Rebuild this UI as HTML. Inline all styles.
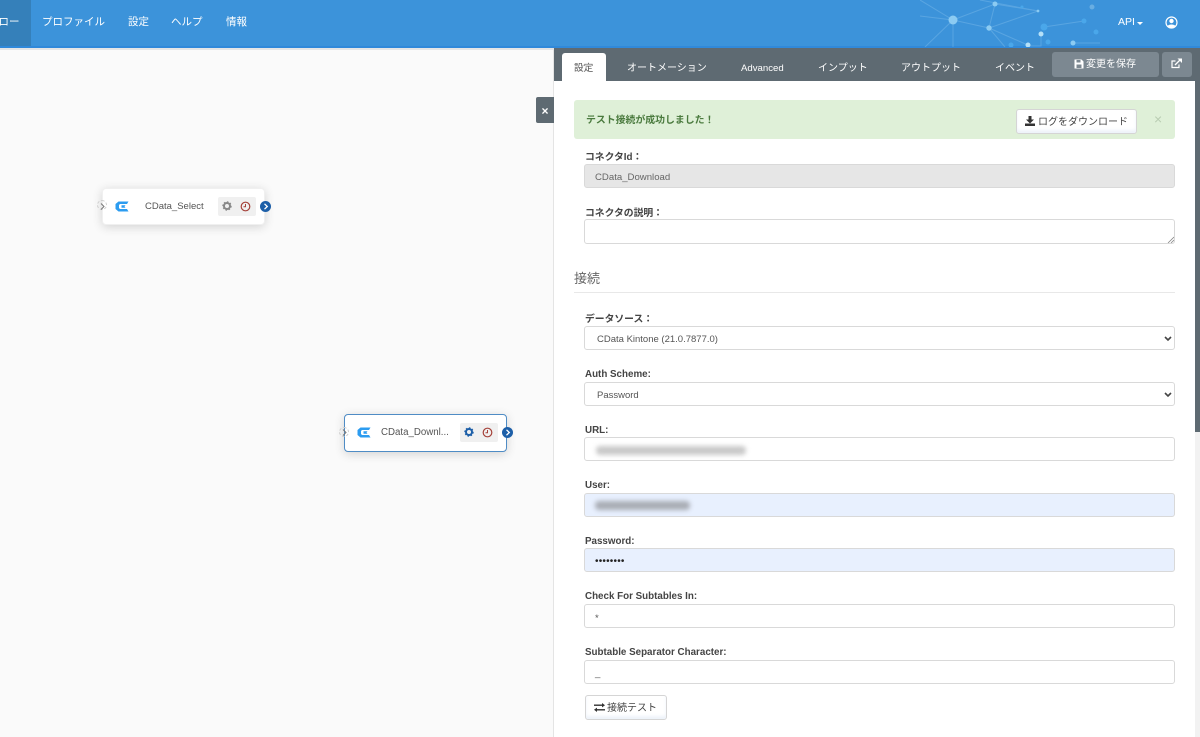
<!DOCTYPE html>
<html lang="ja"><head><meta charset="utf-8"><title>Flow</title>
<style>
html,body{margin:0;padding:0;width:1200px;height:737px;overflow:hidden;background:#fafafa}
body{font-family:"Liberation Sans","Noto Sans CJK JP",sans-serif;font-size:11px;color:#555;position:relative}
.a{position:absolute}
.nav{color:#fff;font-size:10.5px;top:15px;line-height:14px;white-space:nowrap}
.tab{color:#fff;font-size:10px;top:62px;line-height:14px;white-space:nowrap}
.lb{position:absolute;left:585px;font-size:9.8px;font-weight:bold;color:#444;line-height:13px;white-space:nowrap;margin-top:1px}
.in{position:absolute;left:584px;width:589px;height:22px;border:1px solid #d9d9d9;border-radius:3px;background:#fff;font-size:9.6px;color:#555;line-height:25px;text-indent:10px;white-space:nowrap;overflow:hidden}
.blue{background:#e8f0fe}
.node{position:absolute;background:#fff;border-radius:4px;box-shadow:0 2px 10px rgba(0,0,0,.16);box-sizing:border-box}
.nm{position:absolute;font-size:9.5px;color:#555;line-height:12px;white-space:nowrap}
.ib{position:absolute;background:#f0f0f0;width:38px;height:19px;border-radius:2px}
.blur{position:absolute;height:9px;border-radius:4px;filter:blur(2.5px)}
.btn{position:absolute;background:#fff;border:1px solid #d5d5d5;border-radius:3px;box-sizing:border-box;font-size:10px;color:#444;white-space:nowrap;box-shadow:inset 0 -3px 3px #eef3fa}
</style></head><body>

<div class="a" style="left:0;top:0;width:1200px;height:46px;background:#3c93da"></div>
<div class="a" style="left:0;top:46px;width:1200px;height:2px;background:#3089da"></div>
<div class="a" style="left:0;top:48px;width:1200px;height:2px;background:#e6e6e6"></div>
<div class="a" style="left:0;top:0;width:31px;height:46px;background:#3580ba"></div>

<svg class="a" style="left:920px;top:0" width="180" height="47" viewBox="0 0 180 47">
<g stroke="#7dbbea" stroke-width="1" fill="none" opacity=".45">
<path d="M33 20L75 4L69 28L33 20M75 4L118 11L69 28L110 46M69 28L85 47M33 20L5 47M33 20V47M33 20L0 16M121 34V46L108 46M124 27L164 21M0 0L33 20"/>
<path d="M153 43H180M118 11L60 0"/></g>
<g fill="#8ccbf2"><circle cx="33" cy="20" r="4.5"/><circle cx="75" cy="4" r="2.5"/><circle cx="69" cy="28" r="2.7"/><circle cx="118" cy="11" r="1.4"/><circle cx="121" cy="34" r="2.5" fill="#b5e0f8"/><circle cx="108" cy="45" r="2.5" fill="#b5e0f8"/><circle cx="153" cy="43" r="2.5"/></g>
<g fill="#4aa7ea"><circle cx="124" cy="27" r="3.5"/><circle cx="128" cy="42" r="2.5"/><circle cx="91" cy="45" r="2.5"/><circle cx="102" cy="7" r="1.5"/><circle cx="164" cy="21" r="2.5"/><circle cx="176" cy="32" r="2.5"/></g>
<circle cx="172" cy="7" r="2.5" fill="#69aee2"/>
</svg>

<div class="a nav" style="left:-12px;top:15px">フロー</div>
<div class="a nav" style="left:42px">プロファイル</div>
<div class="a nav" style="left:128px">設定</div>
<div class="a nav" style="left:171px">ヘルプ</div>
<div class="a nav" style="left:226px">情報</div>
<div class="a nav" style="left:1118px;font-size:10.5px">API</div>
<div class="a" style="left:1137px;top:22px;width:0;height:0;border-left:3px solid transparent;border-right:3px solid transparent;border-top:3px solid #fff"></div>
<svg class="a" style="left:1165px;top:16px" width="13" height="13" viewBox="0 0 13 13"><circle cx="6.5" cy="6.5" r="5.5" fill="none" stroke="#fff" stroke-width="1.2"/><circle cx="6.5" cy="5" r="2.2" fill="#fff"/><path d="M2.7 10.2C3.5 8 9.5 8 10.3 10.2L6.5 12Z" fill="#fff"/></svg>

<!-- panel -->
<div class="a" style="left:553px;top:48px;width:647px;height:689px;background:#fff;border-left:1px solid #e4e4e4;box-sizing:border-box"></div>
<div class="a" style="left:554px;top:48px;width:646px;height:33px;background:#5e6a72"></div>
<div class="a" style="left:1195px;top:81px;width:5px;height:351px;background:#5e6a72"></div>
<div class="a" style="left:1195px;top:432px;width:5px;height:305px;background:#f2f2f2"></div>

<div class="a" style="left:562px;top:53px;width:44px;height:28px;background:#fff;border-radius:3px 3px 0 0"></div>
<div class="a tab" style="left:574px;color:#555;font-size:9.7px">設定</div>
<div class="a tab" style="left:627px">オートメーション</div>
<div class="a tab" style="left:741px;font-size:9.6px">Advanced</div>
<div class="a tab" style="left:818px">インプット</div>
<div class="a tab" style="left:901px">アウトプット</div>
<div class="a tab" style="left:995px">イベント</div>

<div class="a" style="left:1052px;top:52px;width:107px;height:25px;background:#7c8891;border-radius:3px"></div>
<div class="a" style="left:1086px;top:58px;color:#fff;font-size:10px;line-height:14px;white-space:nowrap">変更を保存</div>
<svg class="a" style="left:1074px;top:59px" width="10" height="10" viewBox="0 0 10 10"><path d="M0.5 0.5H7.5L9.5 2.5V9.5H0.5Z" fill="#fff"/><rect x="2.5" y="1" width="4" height="2.5" fill="#7c8891"/><rect x="2.5" y="5.5" width="5" height="3.5" fill="#7c8891"/></svg>
<div class="a" style="left:1162px;top:52px;width:30px;height:25px;background:#7c8891;border-radius:3px"></div>
<svg class="a" style="left:1171px;top:58px" width="12" height="11" viewBox="0 0 12 11"><path d="M8 6.5V9.5H1V3H4.5" fill="none" stroke="#fff" stroke-width="1.2"/><path d="M4 7L9 2" stroke="#fff" stroke-width="1.3"/><path d="M6.5 0.5H11V5Z" fill="#fff"/></svg>

<div class="a" style="left:536px;top:97px;width:18px;height:26px;background:#5e6a72;border-radius:2px 0 0 2px;color:#fff;font-size:12px;font-weight:bold;line-height:28px;text-align:center">×</div>

<div class="a" style="left:574px;top:100px;width:601px;height:39px;background:#dff0d8;border-radius:3px"></div>
<div class="a" style="left:586px;top:114px;font-size:9.9px;font-weight:bold;color:#4a7a3e;line-height:14px;white-space:nowrap">テスト接続が成功しました！</div>
<div class="btn" style="left:1016px;top:109px;width:121px;height:25px;line-height:25px;padding-left:21px">ログをダウンロード</div>
<svg class="a" style="left:1025px;top:116px" width="10" height="10" viewBox="0 0 10 10"><path d="M3.5 0H6.5V3.5H9L5 7.5L1 3.5H3.5Z" fill="#333"/><rect x="0" y="7.5" width="10" height="2.5" fill="#333"/></svg>
<div class="a" style="left:1154px;top:112px;font-size:14px;color:#b9cdb2;line-height:14px">×</div>

<div class="lb" style="top:150px">コネクタId：</div>
<div class="in" style="top:164px;background:#e6e6e6;color:#666">CData_Download</div>
<div class="lb" style="top:206px">コネクタの説明：</div>
<div class="in" style="top:219px;height:23px"></div>
<svg class="a" style="left:1167px;top:236px" width="7" height="7" viewBox="0 0 7 7"><path d="M1 7L7 1M4 7L7 4" stroke="#888" stroke-width=".8"/></svg>

<div class="a" style="left:574px;top:270px;font-size:13px;color:#666;line-height:17px">接続</div>
<div class="a" style="left:574px;top:292px;width:601px;height:1px;background:#e8e8e8"></div>

<div class="lb" style="top:312px">データソース：</div>
<div class="in" style="top:326px;text-indent:12px;font-size:9.5px">CData Kintone (21.0.7877.0)</div>
<div class="lb" style="top:367px">Auth Scheme:</div>
<div class="in" style="top:382px;text-indent:12px;font-size:9.5px">Password</div>
<svg class="a" style="left:1164px;top:336px" width="8" height="6" viewBox="0 0 8 6"><path d="M1 1L4 4L7 1" fill="none" stroke="#444" stroke-width="1.6"/></svg>
<svg class="a" style="left:1164px;top:392px" width="8" height="6" viewBox="0 0 8 6"><path d="M1 1L4 4L7 1" fill="none" stroke="#444" stroke-width="1.6"/></svg>

<div class="lb" style="top:423px">URL:</div>
<div class="in" style="top:437px"></div>
<div class="blur" style="left:596px;top:446px;width:150px;background:#c9c9c9"></div>
<div class="lb" style="top:478px">User:</div>
<div class="in blue" style="top:493px"></div>
<div class="blur" style="left:595px;top:501px;width:95px;background:#a9adb5"></div>
<div class="lb" style="top:534px">Password:</div>
<div class="in blue" style="top:548px;color:#222;font-size:10px;letter-spacing:.2px">••••••••</div>
<div class="lb" style="top:589px">Check For Subtables In:</div>
<div class="in" style="top:604px;line-height:27px">*</div>
<div class="lb" style="top:645px">Subtable Separator Character:</div>
<div class="in" style="top:660px">_</div>

<div class="btn" style="left:585px;top:695px;width:82px;height:25px;line-height:25px;padding-left:21px">接続テスト</div>
<svg class="a" style="left:594px;top:703px" width="11" height="9" viewBox="0 0 11 9"><path d="M0 2.2H8" stroke="#333" stroke-width="1.4"/><path d="M8 0L11 2.2L8 4.4Z" fill="#333"/><path d="M11 6.8H3" stroke="#333" stroke-width="1.4"/><path d="M3 4.6L0 6.8L3 9Z" fill="#333"/></svg>

<!-- nodes -->
<div class="node" style="left:102px;top:188px;width:163px;height:37px;border:1px solid #f0f0f0"></div>
<div class="a" style="left:97px;top:200px;width:10px;height:10px;border:1px dashed #ccc;border-radius:50%;box-sizing:border-box"></div>
<svg class="a" style="left:100px;top:203px" width="5" height="7" viewBox="0 0 5 7"><path d="M1 .5L4 3.5L1 6.5" fill="none" stroke="#777" stroke-width="1"/></svg>
<svg class="a" style="left:115px;top:201px" width="14" height="11" viewBox="0 0 14 11"><path d="M3.5 0.5H13.5L12 3H5L4 4V7L5 8H12L13.5 10.5H3.5L0.5 8V3Z" fill="#2c9cf0"/><path d="M6.5 4.2H10.5L9.5 5.5L10.5 6.8H6.5Z" fill="#2c9cf0"/></svg>
<div class="nm" style="left:145px;top:201px">CData_Select</div>
<div class="ib" style="left:218px;top:197px"></div>
<svg class="a" style="left:222px;top:201px" width="10" height="10" viewBox="0 0 10 10"><circle cx="5" cy="5" r="3" fill="none" stroke="#888" stroke-width="2"/><circle cx="5" cy="5" r="4" fill="none" stroke="#888" stroke-width="1.4" stroke-dasharray="1.5 1.6"/></svg>
<svg class="a" style="left:240px;top:201px" width="11" height="11" viewBox="0 0 11 11"><circle cx="5.5" cy="5.5" r="4.3" fill="none" stroke="#a5423a" stroke-width="1.2"/><path d="M5.5 3V5.7H3.5" fill="none" stroke="#a5423a"/></svg>
<div class="a" style="left:260px;top:201px;width:11px;height:11px;background:#1d5fa8;border-radius:50%"></div>
<svg class="a" style="left:263px;top:203px" width="6" height="7" viewBox="0 0 6 7"><path d="M1.5 .8L4.3 3.5L1.5 6.2" fill="none" stroke="#fff" stroke-width="1.3"/></svg>

<div class="node" style="left:344px;top:414px;width:163px;height:38px;border:1px solid #4f8cc5"></div>
<div class="a" style="left:339px;top:427px;width:10px;height:10px;border:1px dashed #ccc;border-radius:50%;box-sizing:border-box"></div>
<svg class="a" style="left:342px;top:429px" width="5" height="7" viewBox="0 0 5 7"><path d="M1 .5L4 3.5L1 6.5" fill="none" stroke="#777" stroke-width="1"/></svg>
<svg class="a" style="left:357px;top:427px" width="14" height="11" viewBox="0 0 14 11"><path d="M3.5 0.5H13.5L12 3H5L4 4V7L5 8H12L13.5 10.5H3.5L0.5 8V3Z" fill="#2c9cf0"/><path d="M6.5 4.2H10.5L9.5 5.5L10.5 6.8H6.5Z" fill="#2c9cf0"/></svg>
<div class="nm" style="left:381px;top:426px;font-size:9.7px;margin-top:1px">CData_Downl...</div>
<div class="ib" style="left:460px;top:423px"></div>
<svg class="a" style="left:464px;top:427px" width="10" height="10" viewBox="0 0 10 10"><circle cx="5" cy="5" r="3" fill="none" stroke="#1d5fa8" stroke-width="2"/><circle cx="5" cy="5" r="4" fill="none" stroke="#1d5fa8" stroke-width="1.4" stroke-dasharray="1.5 1.6"/></svg>
<svg class="a" style="left:482px;top:427px" width="11" height="11" viewBox="0 0 11 11"><circle cx="5.5" cy="5.5" r="4.3" fill="none" stroke="#a5423a" stroke-width="1.2"/><path d="M5.5 3V5.7H3.5" fill="none" stroke="#a5423a"/></svg>
<div class="a" style="left:502px;top:427px;width:11px;height:11px;background:#1d5fa8;border-radius:50%"></div>
<svg class="a" style="left:505px;top:429px" width="6" height="7" viewBox="0 0 6 7"><path d="M1.5 .8L4.3 3.5L1.5 6.2" fill="none" stroke="#fff" stroke-width="1.3"/></svg>

</body></html>
